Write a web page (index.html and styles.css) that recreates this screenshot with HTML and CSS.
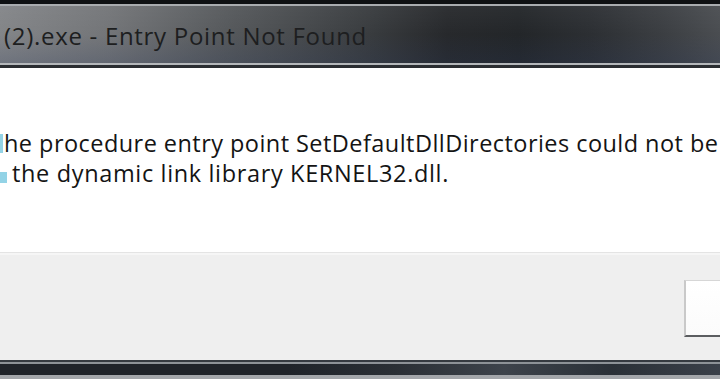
FILE: index.html
```html
<!DOCTYPE html>
<html>
<head>
<meta charset="utf-8">
<link rel="stylesheet" href="styles.css">
</head>
<body>
<div class="window">
  <div class="frame-top"></div>
  <div class="titlebar">
    <span class="title">(2).exe - Entry Point Not Found</span>
  </div>
  <div class="content">
    <div class="line line1"><span class="mark mark1"></span><span class="txt">he procedure entry point SetDefaultDllDirectories could not be</span></div>
    <div class="line line2"><span class="mark mark2"></span><span class="txt">the dynamic link library KERNEL32.dll.</span></div>
  </div>
  <div class="footer">
    <div class="button"></div>
  </div>
  <div class="frame-bottom"></div>
</div>
</body>
</html>
```
FILE: styles.css
```css
html, body {
  margin: 0;
  padding: 0;
  width: 720px;
  height: 379px;
  overflow: hidden;
  background: #a2a5a9;
}
.window {
  display: flex;
  flex-direction: column;
  width: 720px;
  height: 379px;
  font-family: "Open Sans", "Noto Sans", sans-serif;
}
.frame-top {
  height: 4px;
  flex: none;
  background: #0f1113;
  border-bottom: 2px solid #a9acaf;
}
.titlebar {
  height: 57px;
  flex: none;
  display: flex;
  align-items: center;
  padding-left: 4px;
  background:
    linear-gradient(to bottom, rgba(255,255,255,0.04) 0%, rgba(0,0,0,0) 50%, rgba(40,55,90,0.22) 100%),
    linear-gradient(to right, #838588 0%, #737578 15%, #55585b 32%, #3b3e41 50%, #27292c 62%, #232629 72%, #2c2f33 82%, #3b3e42 92%, #4a4d51 100%);
  border-bottom: 2px solid #b4b7ba;
}
.title {
  font-size: 24px;
  letter-spacing: 0.7px;
  color: #1d1e20;
  white-space: nowrap;
  line-height: 30px;
  margin-top: 2px;
}
.content {
  height: 188px;
  flex: none;
  background: #ffffff;
  border-top: 3px solid #2a2d31;
  box-sizing: border-box;
  padding-top: 60px;
  border-bottom: 1px solid #e4e4e4;
}
.line {
  display: flex;
  align-items: center;
  height: 30px;
  white-space: nowrap;
  font-size: 23.5px;
  letter-spacing: 0.45px;
  line-height: 30px;
  color: #141414;
}
.line2 {
  letter-spacing: 0.65px;
}
.mark {
  display: inline-block;
  background: #93d3e6;
  flex: none;
}
.mark1 {
  width: 3px;
  height: 19px;
  margin-right: 1px;
}
.mark2 {
  width: 7px;
  height: 11px;
  margin-top: 9px;
  margin-right: 5px;
}
.footer {
  flex: 1;
  background: #efefef;
  border-top: 2px solid #f6f6f6;
  display: flex;
  justify-content: flex-end;
  align-items: flex-start;
  padding-top: 25px;
  box-sizing: border-box;
}
.button {
  width: 36px;
  height: 57px;
  background: linear-gradient(to bottom, #ffffff 0%, #fbfbfb 100%);
  border-top: 1px solid #d6d6d6;
  border-left: 2px solid #c9c9c9;
  border-bottom: 2px solid #5b5d60;
  box-sizing: border-box;
}
.frame-bottom {
  height: 19px;
  flex: none;
  box-sizing: border-box;
  border-top: 2px solid #353a40;
  background:
    linear-gradient(to bottom, #8d9297 0px, #8d9297 2px, transparent 2px, transparent 13px, #a3a6aa 13px),
    linear-gradient(to right, #1f2329 0%, #1f2329 40%, #2a2f35 55%, #3d434b 70%, #2a3037 85%, #3a4049 100%);
}
```
